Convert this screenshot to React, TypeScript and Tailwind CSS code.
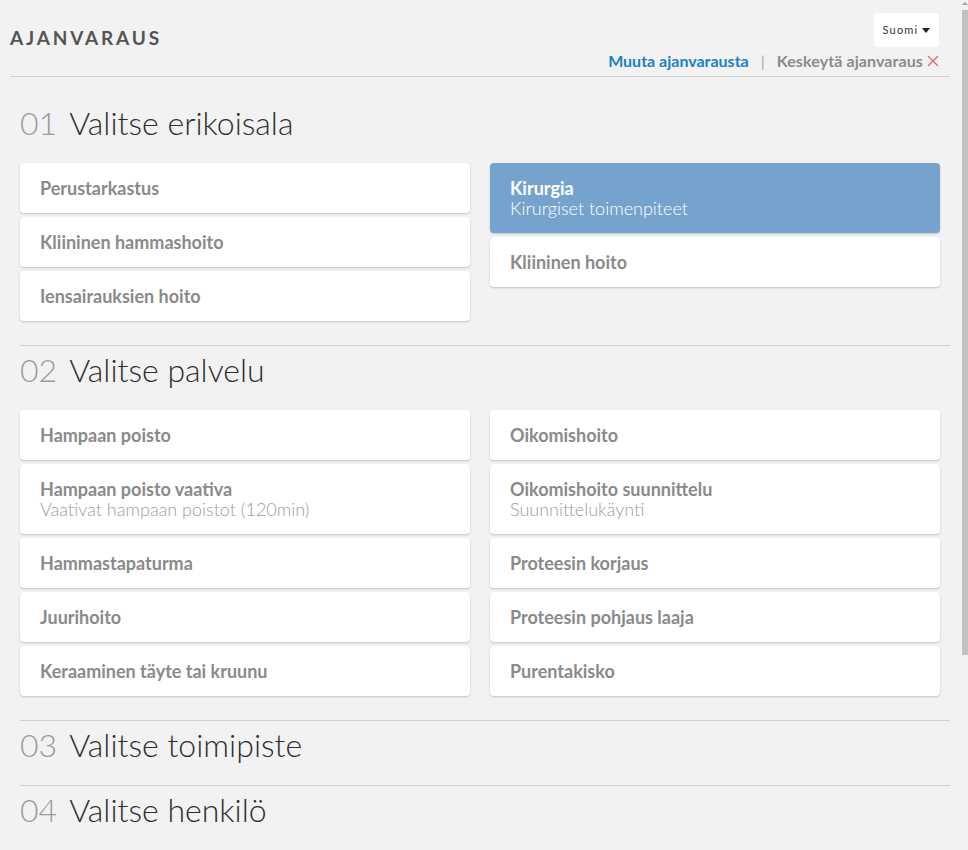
import React from 'react';

type Option = { title: string; sub?: string; selected?: boolean };

const specialties: Option[][] = [
  [{ title: 'Perustarkastus' }, { title: 'Kliininen hammashoito' }, { title: 'Iensairauksien hoito' }],
  [{ title: 'Kirurgia', sub: 'Kirurgiset toimenpiteet', selected: true }, { title: 'Kliininen hoito' }],
];

const services: Option[][] = [
  [
    { title: 'Hampaan poisto' },
    { title: 'Hampaan poisto vaativa', sub: 'Vaativat hampaan poistot (120min)' },
    { title: 'Hammastapaturma' },
    { title: 'Juurihoito' },
    { title: 'Keraaminen täyte tai kruunu' },
  ],
  [
    { title: 'Oikomishoito' },
    { title: 'Oikomishoito suunnittelu', sub: 'Suunnittelukäynti' },
    { title: 'Proteesin korjaus' },
    { title: 'Proteesin pohjaus laaja' },
    { title: 'Purentakisko' },
  ],
];

const Card: React.FC<{ opt: Option }> = ({ opt }) => (
  <div
    className={
      opt.selected
        ? 'rounded-[4px] bg-[#76a3ce] px-5 py-[15px] text-[18px] leading-5 text-white shadow-[0_1px_2px_rgba(0,0,0,0.2)]'
        : 'rounded-[4px] bg-white px-5 py-[15px] text-[18px] leading-5 text-[#8a8a8a] shadow-[0_1px_2px_rgba(0,0,0,0.2)]'
    }
  >
    <div className="font-bold">{opt.title}</div>
    {opt.sub && <div className={opt.selected ? 'font-light text-white' : 'font-light text-[#9c9c9c]'}>{opt.sub}</div>}
  </div>
);

const Heading: React.FC<{ num: string; text: string }> = ({ num, text }) => (
  <h2 className="flex h-9 items-center text-[32px] font-light leading-9">
    <span className="mr-[12px] text-[#9a9a9a]">{num}</span>
    <span className="text-[#2e2e2e]">{text}</span>
  </h2>
);

const Columns: React.FC<{ cols: Option[][] }> = ({ cols }) => (
  <div className="grid grid-cols-2 gap-5 pr-[10px]">
    {cols.map((col, i) => (
      <div key={i} className="flex flex-col gap-1">
        {col.map((o) => (
          <Card key={o.title} opt={o} />
        ))}
      </div>
    ))}
  </div>
);

export default function App() {
  return (
    <div className="flex h-[850px] overflow-hidden bg-[#f2f2f2]" style={{ fontFamily: 'Lato, "Open Sans", sans-serif' }}>
      <main className="w-[960px] px-[10px]">
        {/* header */}
        <div className="flex items-end justify-between border-b border-[#cfcfcf] pb-[5px] pr-[11px] pt-[13px]">
          <h1 className="mb-[19px] text-[19px] font-bold tracking-[2.8px] text-[#555]">AJANVARAUS</h1>
          <div className="flex flex-col items-end">
            <button className="flex h-[34px] w-[65px] items-center justify-center gap-1 rounded-[4px] bg-white text-[11px] tracking-[1.2px] text-[#333]">
              Suomi
              <span className="inline-block h-0 w-0 border-x-[4px] border-t-[5px] border-x-transparent border-t-[#222]" />
            </button>
            <div className="mt-[4px] flex items-center text-[16px] font-bold leading-5">
              <span className="text-[#1a80c4]">Muuta ajanvarausta</span>
              <span className="mx-[12px] font-normal text-[#aaa]">|</span>
              <span className="tracking-[0.1px] text-[#8a8a8a]">Keskeytä ajanvaraus</span>
              <svg width="12" height="12" viewBox="0 0 12 12" className="ml-[4px]">
                <path d="M1 1L11 11M11 1L1 11" stroke="#e8606a" strokeWidth="1.2" fill="none" />
              </svg>
            </div>
          </div>
        </div>

        {/* 01 */}
        <section className="ml-[10px] border-b border-[#cfcfcf] pb-6 pt-[28px]">
          <Heading num="01" text="Valitse erikoisala" />
          <div className="mt-[22px]">
            <Columns cols={specialties} />
          </div>
        </section>

        {/* 02 */}
        <section className="ml-[10px] border-b border-[#cfcfcf] pb-6 pt-[6px]">
          <Heading num="02" text="Valitse palvelu" />
          <div className="mt-[22px]">
            <Columns cols={services} />
          </div>
        </section>

        {/* 03 */}
        <section className="ml-[10px] border-b border-[#cfcfcf] pb-[22px] pt-[6px]">
          <Heading num="03" text="Valitse toimipiste" />
        </section>

        {/* 04 */}
        <section className="ml-[10px] pb-[22px] pt-[6px]">
          <Heading num="04" text="Valitse henkilö" />
        </section>
      </main>

      {/* scrollbar */}
      <div className="ml-[2px] flex w-[6px] flex-col items-center">
        <span className="mt-[2px] h-0 w-0 border-x-[3px] border-b-[3px] border-x-transparent border-b-[#a3a3a3]" />
        <div className="mt-[5px] h-[645px] w-[6px] bg-[#c1c1c1]" />
      </div>
    </div>
  );
}
